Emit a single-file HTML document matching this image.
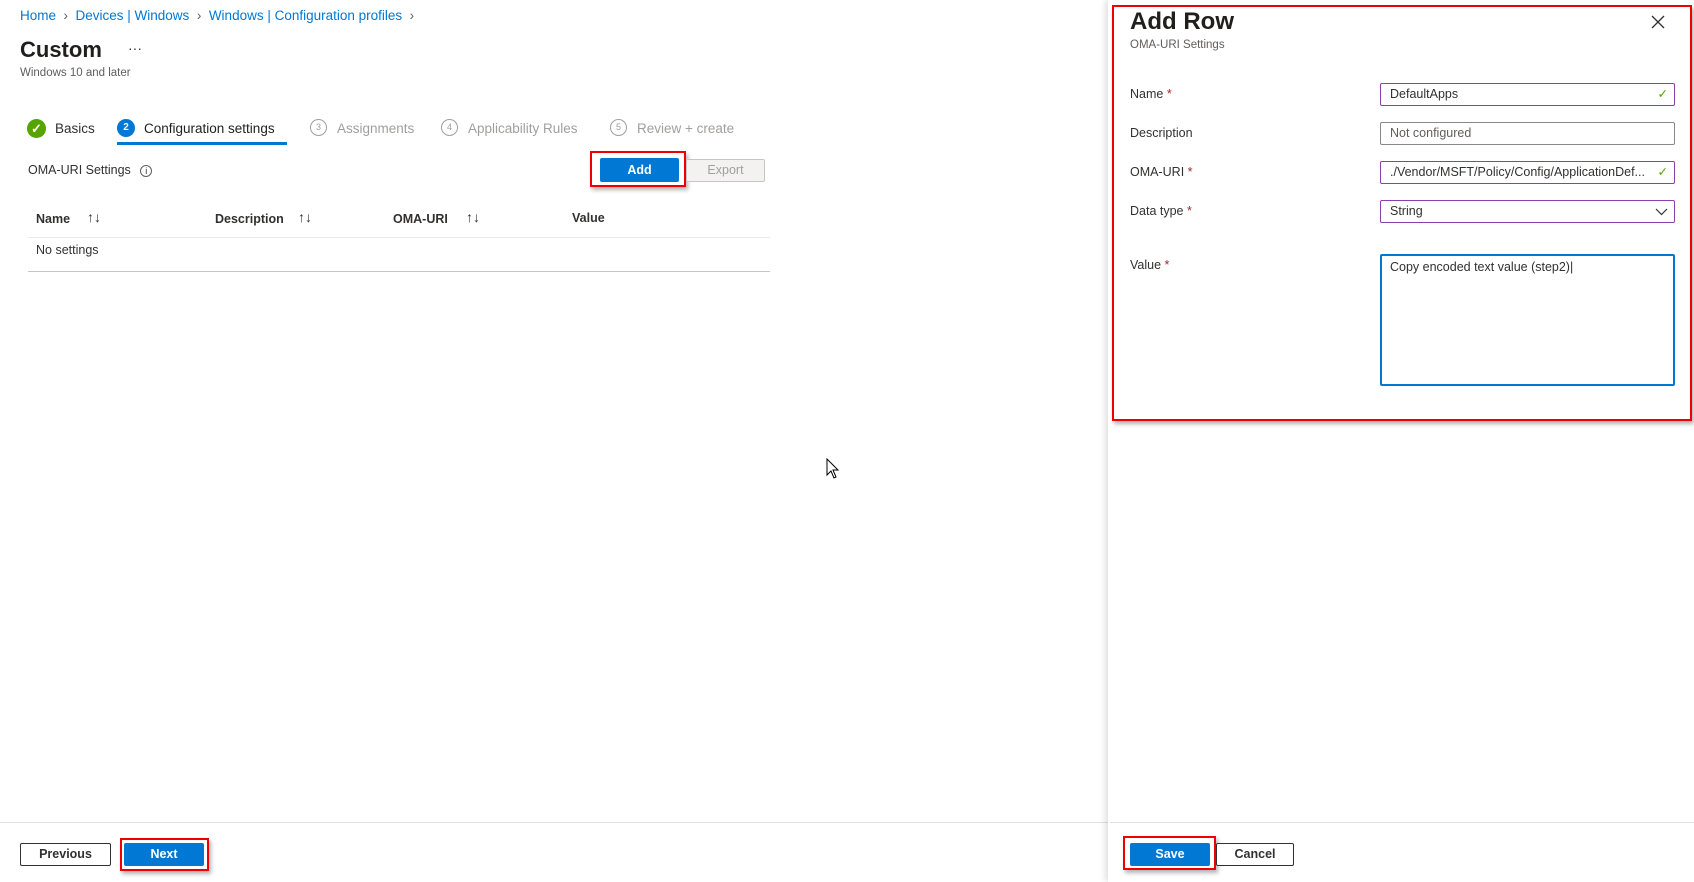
<!DOCTYPE html>
<html><head><meta charset="utf-8"><style>
*{box-sizing:border-box;margin:0;padding:0}
body{width:1694px;height:882px;position:relative;background:#fff;font-family:"Liberation Sans",sans-serif;font-size:13px;color:#323130;overflow:hidden}
.a{position:absolute;white-space:nowrap}
.blue{color:#0078d4}
.gray{color:#a19f9d}
.circ{position:absolute;width:17px;height:17px;border-radius:50%;border:1px solid #a19f9d;font-size:9px;text-align:center;line-height:15px;color:#a19f9d}
.inp{position:absolute;left:1380px;width:295px;height:23px;border:1px solid #8a3fb0;border-radius:2px;padding-left:9px;line-height:21px;font-size:12.5px}
.btn{position:absolute;height:23px;line-height:23px;text-align:center;font-weight:bold;font-size:12.5px;border-radius:2px}
.red{position:absolute;border:2px solid #e00;box-shadow:2px 3px 4px rgba(0,0,0,.3)}
.star{color:#a4262c}
</style></head><body>
<div class="a blue" style="left:20px;top:8px;font-size:13.5px">Home <span style="color:#605e5c">&nbsp;›&nbsp;</span> Devices | Windows <span style="color:#605e5c">&nbsp;›&nbsp;</span> Windows | Configuration profiles <span style="color:#605e5c">&nbsp;›</span></div>
<div class="a" style="left:20px;top:37px;font-size:22px;font-weight:600;color:#201f1e">Custom</div>
<div class="a" style="left:128px;top:40px;font-size:14px">···</div>
<div class="a" style="left:20px;top:67px;font-size:11.5px;color:#605e5c">Windows 10 and later</div>

<div style="position:absolute;left:27px;top:119px;width:19px;height:19px;border-radius:50%;background:#57a300;color:#fff;font-size:13px;text-align:center;line-height:19px;font-weight:bold">✓</div>
<div class="a" style="left:55px;top:121px;font-size:13.5px">Basics</div>
<div style="position:absolute;left:117px;top:119px;width:18px;height:18px;border-radius:50%;background:#0078d4;color:#fff;font-size:10px;text-align:center;line-height:18px;font-weight:bold">2</div>
<div class="a" style="left:144px;top:121px;font-size:13.5px;color:#201f1e">Configuration settings</div>
<div style="position:absolute;left:117px;top:142px;width:170px;height:3px;background:#0078d4"></div>
<div class="circ" style="left:310px;top:119px">3</div><div class="a gray" style="left:337px;top:121px;font-size:13.5px">Assignments</div>
<div class="circ" style="left:441px;top:119px">4</div><div class="a gray" style="left:468px;top:121px;font-size:13.5px">Applicability Rules</div>
<div class="circ" style="left:610px;top:119px">5</div><div class="a gray" style="left:637px;top:121px;font-size:13.5px">Review + create</div>

<div class="a" style="left:28px;top:163px;font-size:12.5px">OMA-URI Settings <span style="display:inline-block;width:12px;height:12px;border:1px solid #605e5c;border-radius:50%;font-size:9px;text-align:center;line-height:10px;margin-left:6px">i</span></div>
<div class="red" style="left:590px;top:151px;width:96px;height:36px"></div>
<div class="btn" style="left:600px;top:158px;width:79px;height:24px;line-height:24px;background:#0078d4;color:#fff">Add</div>
<div class="btn" style="left:686px;top:159px;width:79px;height:23px;line-height:21px;border:1px solid #c8c6c4;background:#f3f2f1;color:#a19f9d;font-weight:normal">Export</div>

<div class="a" style="left:36px;top:212px;font-weight:600;font-size:12.5px">Name</div><div class="a" style="left:87px;top:209px;font-size:14px">↑↓</div>
<div class="a" style="left:215px;top:212px;font-weight:600;font-size:12.5px">Description</div><div class="a" style="left:298px;top:209px;font-size:14px">↑↓</div>
<div class="a" style="left:393px;top:212px;font-weight:600;font-size:12.5px">OMA-URI</div><div class="a" style="left:466px;top:209px;font-size:14px">↑↓</div>
<div class="a" style="left:572px;top:211px;font-weight:600;font-size:12.5px">Value</div>
<div style="position:absolute;left:28px;top:237px;width:742px;height:1px;background:#edebe9"></div>
<div class="a" style="left:36px;top:243px;font-size:12.5px">No settings</div>
<div style="position:absolute;left:28px;top:271px;width:742px;height:1px;background:#c8c6c4"></div>

<svg style="position:absolute;left:826px;top:458px" width="14" height="22" viewBox="0 0 14 22"><path d="M1 1 L1 17 L5 13 L8 20 L10 19 L7 12 L12 12 Z" fill="#fff" stroke="#000" stroke-width="1"/></svg>

<div style="position:absolute;left:0;top:822px;width:1110px;height:1px;background:#e1dfdd"></div>
<div class="btn" style="left:20px;top:843px;width:91px;line-height:21px;border:1px solid #323130;background:#fff;font-weight:600">Previous</div>
<div class="red" style="left:120px;top:838px;width:89px;height:33px"></div>
<div class="btn" style="left:124px;top:843px;width:80px;background:#0078d4;color:#fff">Next</div>

<div style="position:absolute;left:1108px;top:0;width:586px;height:882px;background:#fff;box-shadow:-3px 0 6px rgba(0,0,0,.12)"></div>
<div style="position:absolute;left:1110px;top:822px;width:584px;height:1px;background:#e1dfdd"></div>
<div class="red" style="left:1112px;top:5px;width:580px;height:416px"></div>
<div class="a" style="left:1130px;top:8px;font-size:24px;font-weight:600;color:#201f1e">Add Row</div>
<div class="a" style="left:1130px;top:39px;font-size:11.5px;color:#605e5c">OMA-URI Settings</div>
<svg style="position:absolute;left:1651px;top:15px" width="14" height="14"><path d="M1 1L13 13M13 1L1 13" stroke="#323130" stroke-width="1.3"/></svg>

<div class="a" style="left:1130px;top:87px;font-size:12.5px">Name <span class="star">*</span></div>
<div class="inp" style="top:83px">DefaultApps<span style="position:absolute;right:6px;color:#57a300">✓</span></div>
<div class="a" style="left:1130px;top:126px;font-size:12.5px">Description</div>
<div class="inp" style="top:122px;border-color:#8a8886;color:#605e5c">Not configured</div>
<div class="a" style="left:1130px;top:165px;font-size:12.5px">OMA-URI <span class="star">*</span></div>
<div class="inp" style="top:161px">./Vendor/MSFT/Policy/Config/ApplicationDef...<span style="position:absolute;right:6px;color:#57a300">✓</span></div>
<div class="a" style="left:1130px;top:204px;font-size:12.5px">Data type <span class="star">*</span></div>
<div class="inp" style="top:200px">String<svg style="position:absolute;right:6px;top:7px" width="13" height="8"><path d="M1 1L6.5 6.5L12 1" stroke="#323130" fill="none" stroke-width="1.2"/></svg></div>
<div class="a" style="left:1130px;top:258px;font-size:12.5px">Value <span class="star">*</span></div>
<div style="position:absolute;left:1380px;top:254px;width:295px;height:132px;border:2px solid #0078d4;border-radius:2px;padding:4px 8px;font-size:12.5px">Copy encoded text value (step2)|</div>

<div class="red" style="left:1123px;top:836px;width:93px;height:34px"></div>
<div class="btn" style="left:1130px;top:843px;width:80px;background:#0078d4;color:#fff">Save</div>
<div class="btn" style="left:1216px;top:843px;width:78px;line-height:21px;border:1px solid #323130;background:#fff;font-weight:600">Cancel</div>
</body></html>
